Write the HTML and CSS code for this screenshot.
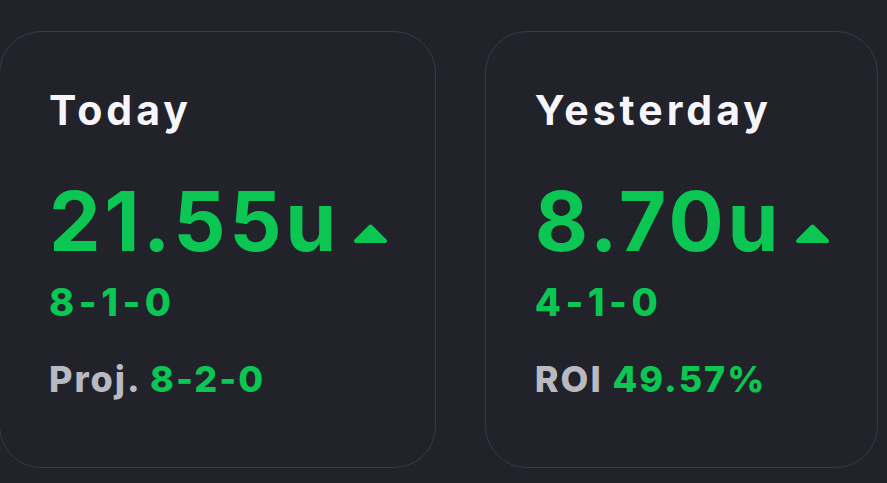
FILE: index.html
```html
<!DOCTYPE html>
<html>
<head>
<meta charset="utf-8">
<link rel="stylesheet" href="styles.css">
</head>
<body>
<div class="row">
  <div class="card">
    <div class="title">Today</div>
    <div class="big">
      <span class="units">21.55u</span>
      <svg class="tri" width="33" height="19" viewBox="0 0 33 19"><polygon points="16.5,2.5 31,17 2,17"/></svg>
    </div>
    <div class="record">8-1-0</div>
    <div class="foot"><span class="label">Proj.</span> <span class="val">8-2-0</span></div>
  </div>
  <div class="card">
    <div class="title">Yesterday</div>
    <div class="big">
      <span class="units">8.70u</span>
      <svg class="tri" width="33" height="19" viewBox="0 0 33 19"><polygon points="16.5,2.5 31,17 2,17"/></svg>
    </div>
    <div class="record">4-1-0</div>
    <div class="foot"><span class="label">ROI</span> <span class="val">49.57%</span></div>
  </div>
</div>
</body>
</html>
```

FILE: styles.css
```css
html, body {
  margin: 0;
  padding: 0;
  background: #22222b;
  height: 100%;
  overflow: hidden;
}

.row {
  display: flex;
  gap: 49px;
  padding-top: 31px;
  margin-left: -1px;
  font-family: "Inter", "Liberation Sans", sans-serif;
}

.card {
  flex: none;
  box-sizing: border-box;
  height: 437px;
  border: 1px solid #3a3a44;
  border-radius: 42px;
  padding: 58px 48px 0 49px;
  background: #22222b;
}

.title {
  font-size: 41px;
  line-height: 41px;
  font-weight: 700;
  color: #f5f5fa;
  letter-spacing: 4px;
}

.big {
  display: flex;
  align-items: flex-end;
  margin-top: 50px;
}

.units {
  font-size: 82px;
  line-height: 82px;
  font-weight: 700;
  color: #0bc653;
  letter-spacing: 3.5px;
}

.tri {
  margin-left: 14px;
  margin-bottom: 20px;
}

.tri polygon {
  fill: #0bc653;
  stroke: #0bc653;
  stroke-width: 4;
  stroke-linejoin: round;
}

.record {
  margin-top: 20px;
  font-size: 38px;
  line-height: 38px;
  font-weight: 800;
  color: #0bc653;
  letter-spacing: 4.5px;
}

.foot {
  margin-top: 40px;
  font-size: 36px;
  line-height: 36px;
  font-weight: 800;
  letter-spacing: 2px;
}

.label {
  color: #b9b9c1;
}

.val {
  color: #0bc653;
}
```
